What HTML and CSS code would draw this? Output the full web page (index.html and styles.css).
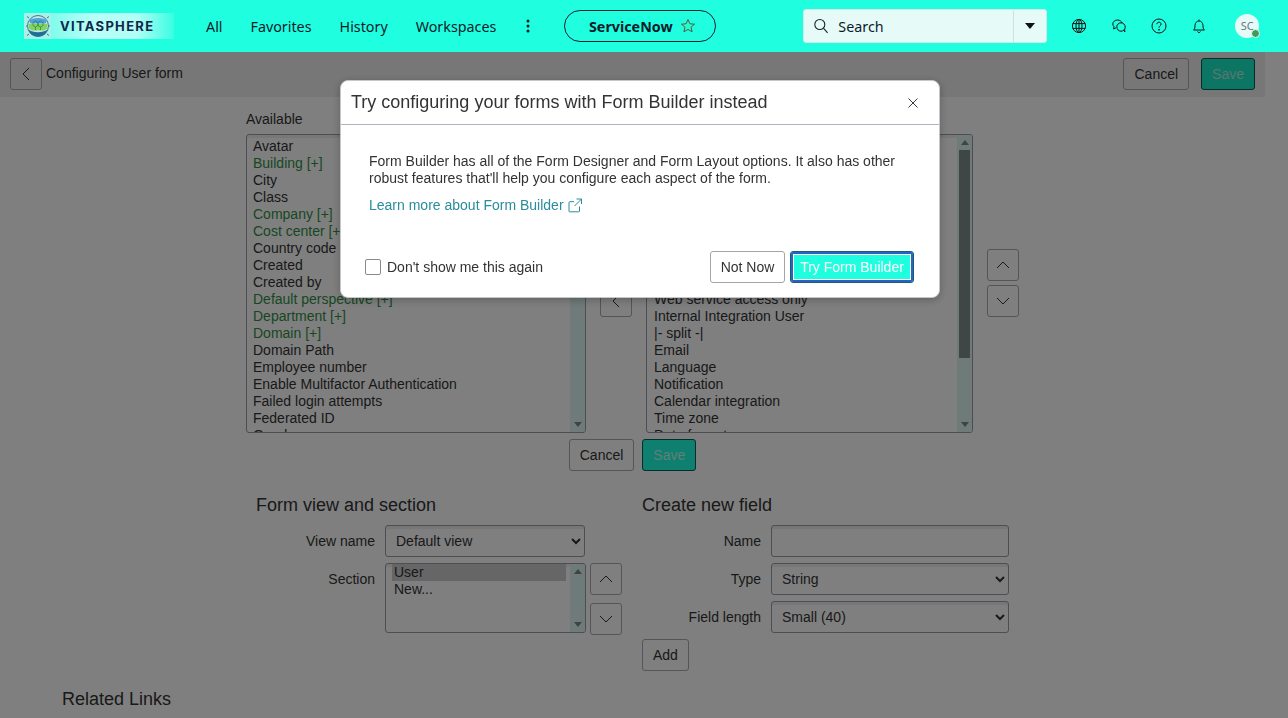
FILE: index.html
```html
<!DOCTYPE html>
<html lang="en">
<head>
  <meta charset="UTF-8" />
  <title>Configuring User form</title>
  <link rel="stylesheet" href="styles.css">
</head>
<body>
  <header class="topbar">
    <a class="logo">
      <span class="logo-mark">
        <svg width="24" height="24" viewBox="0 0 24 24">
          <circle cx="12" cy="12" r="10.500" fill="#bfe8ee" stroke="#33566e" stroke-width=".8"/>
          <path d="M3 6.500c3-3.500 15-3.500 18 0l-1.500 3h-15z" fill="#4aa6d8"/>
          <path d="M2.500 10h19l-.5 4.500-3 2h-12l-3-2z" fill="#7fd65a"/>
          <path d="M2.500 15.500c4 3.500 15 3.500 19 0-1.500 5-5 7-9.500 7s-8-2-9.500-7z" fill="#1f6fa5"/>
          <path d="M7 8.500l2.500-1.500L12 8.500v3L9.500 13 7 11.500zM12 8.500l2.500-1.500L17 8.500v3L14.500 13 12 11.500zM9.500 13v3M14.500 13v3M5 19c4 2 10 2 14-1" fill="none" stroke="#2b6a4a" stroke-width=".6"/>
          <path d="M1 12H0M24 12h-1M3 4L1 2.500M21 4l2-1.500M3 20l-2 1.500M21 20l2 1.500" stroke="#33566e" stroke-width=".8"/>
        </svg>
      </span>
      <span class="logo-name">VITASPHERE</span>
    </a>
    <nav class="nav">
      <a>All</a>
      <a>Favorites</a>
      <a>History</a>
      <a>Workspaces</a>
    </nav>
    <svg class="nav-more" width="4" height="14" viewBox="0 0 4 14"><circle cx="2" cy="2" r="1.500"/><circle cx="2" cy="7" r="1.500"/><circle cx="2" cy="12" r="1.500"/></svg>
    <div class="pill">
      <span>ServiceNow</span>
      <svg width="16" height="16" viewBox="0 0 16 16"><path d="M8 1.500l1.900 4.300 4.600.4-3.500 3 1.100 4.600L8 11.400l-4.100 2.400L5 9.200l-3.500-3 4.600-.4z" fill="none" stroke="#5d5a2a" stroke-width="1"/></svg>
    </div>
    <div class="search">
      <svg width="16" height="16" viewBox="0 0 16 16"><circle cx="6.800" cy="6.500" r="5" fill="none" stroke="#1a2230" stroke-width="1.100"/><path d="M10.400 10.200l4.200 4.600" stroke="#1a2230" stroke-width="1.100"/></svg>
      <span class="search-text">Search</span>
      <span class="search-caret"><i></i></span>
    </div>
    <div class="tools">
      <svg width="16" height="16" viewBox="0 0 16 16" fill="none" stroke="#111" stroke-width="1"><circle cx="8" cy="8" r="6.600"/><ellipse cx="8" cy="8" rx="3" ry="6.600"/><path d="M1.800 5.600h12.400M1.800 10.400h12.400M8 1.400v13.200"/></svg>
      <svg width="16" height="16" viewBox="0 0 16 16" fill="none" stroke="#111" stroke-width="1"><path d="M6.500 2C3.900 2 1.800 3.800 1.800 6c0 1 .4 1.900 1.200 2.600L2.600 11l2.300-1.200"/><path d="M6.500 2c2.300 0 4.200 1.300 4.600 3.100"/><circle cx="10" cy="9" r="4.200"/><path d="M12.500 12.400l1.400 1.500-.2-2.600"/></svg>
      <svg width="16" height="16" viewBox="0 0 16 16" fill="none" stroke="#111" stroke-width="1"><circle cx="8" cy="8" r="7"/><path d="M5.900 6.200C5.900 5 6.900 4.200 8 4.200s2.100.8 2.100 1.900c0 1.600-2.100 1.700-2.100 3.500"/><circle cx="8" cy="11.700" r=".5" fill="#111"/></svg>
      <svg width="16" height="16" viewBox="0 0 16 16" fill="none" stroke="#111" stroke-width="1"><path d="M2.500 12c1.300-1 1.500-2.200 1.500-4.500C4 5 5.700 3 8 3s4 2 4 4.500c0 2.300.2 3.500 1.500 4.500z"/><path d="M8 1.500V3M6.500 13.500c.3.800.8 1 1.500 1s1.200-.2 1.500-1"/></svg>
    </div>
    <div class="avatar">SC<span class="avatar-dot"></span></div>
  </header>

  <main class="page">
    <div class="form-head">
      <button class="btn btn-icon"><svg width="10" height="14" viewBox="0 0 10 14"><path d="M8 1L2 7l6 6" fill="none" stroke="#333" stroke-width="1"/></svg></button>
      <span class="form-title">Configuring User form</span>
      <span class="spacer"></span>
      <button class="btn">Cancel</button>
      <button class="btn btn-save btn-save-head">Save</button>
    </div>

    <section class="slush">
      <div class="slush-col">
        <label class="slush-label">Available</label>
        <div class="list list-avail">
          <div class="list-items">
            <div>Avatar</div>
            <div class="ref">Building [+]</div>
            <div>City</div>
            <div>Class</div>
            <div class="ref">Company [+]</div>
            <div class="ref">Cost center [+]</div>
            <div>Country code</div>
            <div>Created</div>
            <div>Created by</div>
            <div class="ref">Default perspective [+]</div>
            <div class="ref">Department [+]</div>
            <div class="ref">Domain [+]</div>
            <div>Domain Path</div>
            <div>Employee number</div>
            <div>Enable Multifactor Authentication</div>
            <div>Failed login attempts</div>
            <div>Federated ID</div>
            <div>Gender</div>
            <div>Home phone</div>
          </div>
          <div class="scrollbar">
            <span class="sb-arrow sb-up"></span>
            <div class="sb-track"><div class="sb-thumb sb-thumb-avail"></div></div>
            <span class="sb-arrow sb-down"></span>
          </div>
        </div>
      </div>
      <div class="move-col">
        <button class="btn btn-icon"><svg width="10" height="14" viewBox="0 0 10 14"><path d="M2 1l6 6-6 6" fill="none" stroke="#333" stroke-width="1"/></svg></button>
        <button class="btn btn-icon"><svg width="10" height="14" viewBox="0 0 10 14"><path d="M8 1L2 7l6 6" fill="none" stroke="#333" stroke-width="1"/></svg></button>
      </div>
      <div class="slush-col">
        <label class="slush-label">Selected</label>
        <div class="list list-sel">
          <div class="list-items">
            <div>User ID</div>
            <div>First name</div>
            <div>Last name</div>
            <div>Title</div>
            <div>Department</div>
            <div>Password</div>
            <div>Password needs reset</div>
            <div>Locked out</div>
            <div>Active</div>
            <div>Web service access only</div>
            <div>Internal Integration User</div>
            <div>|- split -|</div>
            <div>Email</div>
            <div>Language</div>
            <div>Notification</div>
            <div>Calendar integration</div>
            <div>Time zone</div>
            <div>Date format</div>
            <div>Time format</div>
          </div>
          <div class="scrollbar">
            <span class="sb-arrow sb-up"></span>
            <div class="sb-track"><div class="sb-thumb sb-thumb-sel"></div></div>
            <span class="sb-arrow sb-down"></span>
          </div>
        </div>
      </div>
      <div class="move-col">
        <button class="btn btn-icon"><svg width="14" height="10" viewBox="0 0 14 10"><path d="M1 8l6-6 6 6" fill="none" stroke="#333" stroke-width="1"/></svg></button>
        <button class="btn btn-icon"><svg width="14" height="10" viewBox="0 0 14 10"><path d="M1 2l6 6 6-6" fill="none" stroke="#333" stroke-width="1"/></svg></button>
      </div>
    </section>

    <div class="slush-actions">
      <button class="btn">Cancel</button>
      <button class="btn btn-save">Save</button>
    </div>

    <section class="config">
      <div class="config-view">
        <h3 class="config-title config-title-view">Form view and section</h3>
        <div class="field field-view">
          <label>View name</label>
          <select class="input"><option>Default view</option></select>
        </div>
        <div class="field field-view">
          <label>Section</label>
          <div class="section-pick">
            <div class="list list-section">
              <div class="list-items">
                <div class="picked">User</div>
                <div>New...</div>
              </div>
              <div class="scrollbar">
                <span class="sb-arrow sb-up"></span>
                <div class="sb-track"></div>
                <span class="sb-arrow sb-down"></span>
              </div>
            </div>
            <div class="section-move">
              <button class="btn btn-icon"><svg width="14" height="10" viewBox="0 0 14 10"><path d="M1 8l6-6 6 6" fill="none" stroke="#333" stroke-width="1"/></svg></button>
              <button class="btn btn-icon"><svg width="14" height="10" viewBox="0 0 14 10"><path d="M1 2l6 6 6-6" fill="none" stroke="#333" stroke-width="1"/></svg></button>
            </div>
          </div>
        </div>
      </div>
      <div class="config-new">
        <h3 class="config-title">Create new field</h3>
        <div class="field field-new">
          <label>Name</label>
          <input class="input" type="text">
        </div>
        <div class="field field-new">
          <label>Type</label>
          <select class="input"><option>String</option></select>
        </div>
        <div class="field field-new">
          <label>Field length</label>
          <select class="input"><option>Small (40)</option></select>
        </div>
        <button class="btn btn-add">Add</button>
      </div>
    </section>

    <h3 class="related">Related Links</h3>
  </main>

  <div class="backdrop"></div>
  <div class="modal">
    <div class="modal-head">
      <h2>Try configuring your forms with Form Builder instead</h2>
      <svg width="12" height="12" viewBox="0 0 12 12"><path d="M1.500 1.500l9 9M10.500 1.500l-9 9" stroke="#222" stroke-width=".9"/></svg>
    </div>
    <div class="modal-body">
      <p>Form Builder has all of the Form Designer and Form Layout options. It also has other robust features that'll help you configure each aspect of the form.</p>
      <a class="modal-link">Learn more about Form Builder
        <svg width="15" height="15" viewBox="0 0 15 15" fill="none" stroke="#2a8c9c" stroke-width="1"><path d="M11.500 8.500v4.500a.8.8 0 0 1-.8.8H1.800a.8.8 0 0 1-.8-.8V4.500a.8.8 0 0 1 .8-.8H6"/><path d="M8.500 1h5v5M13.500 1L6.500 8"/></svg>
      </a>
    </div>
    <div class="modal-foot">
      <label class="check"><input type="checkbox"><span>Don't show me this again</span></label>
      <span class="spacer"></span>
      <button class="btn btn-light">Not Now</button>
      <button class="btn btn-primary">Try Form Builder</button>
    </div>
  </div>
</body>
</html>
```
FILE: styles.css
```css
* {
  box-sizing: border-box;
}
html, body {
  height: 100%;
}
body {
  margin: 0;
  overflow: hidden;
  background-color: #fff;
  color: #333;
  font-family: "Liberation Sans", Arial, sans-serif;
  font-size: 14px;
}
h2, h3, p {
  margin: 0;
  font-weight: normal;
}
.spacer {
  flex: 1;
}

/* top bar */
.topbar {
  display: flex;
  align-items: center;
  height: 52px;
  padding-left: 24px;
  background-color: #1fffdf;
  color: #0c1a2b;
  font-family: "Noto Sans", sans-serif;
  font-size: 14.3px;
}
.logo {
  display: flex;
  width: 150px;
  height: 26px;
}
.logo-mark {
  display: flex;
  align-items: center;
  justify-content: center;
  flex: none;
  width: 27px;
  background-color: #a8f0e8;
}
.logo-name {
  flex: 1;
  padding-left: 9px;
  background: linear-gradient(90deg, #7ffcec 0%, #b8fff8 35%, #b0fff5 70%, #3afde3 100%);
  color: #12254a;
  font-family: Inter, sans-serif;
  font-size: 13px;
  font-weight: 700;
  letter-spacing: 1.3px;
  line-height: 26px;
}
.nav {
  display: flex;
  gap: 28px;
  margin-left: 32px;
}
.nav-more {
  margin-left: 30px;
  fill: #0c1a2b;
}
.pill {
  display: flex;
  align-items: center;
  justify-content: center;
  gap: 7px;
  width: 152px;
  height: 32px;
  margin-left: 34px;
  padding-left: 4px;
  border: 1px solid #123;
  border-radius: 16px;
  font-weight: 700;
}
.search {
  display: flex;
  align-items: center;
  width: 244px;
  height: 34px;
  margin-left: 87px;
  padding-left: 9px;
  border: 1px solid #cfe9e6;
  border-radius: 3px;
  background-color: #e6faf7;
}
.search-text {
  flex: 1;
  margin-left: 9px;
}
.search-caret {
  display: flex;
  align-items: center;
  justify-content: center;
  width: 33px;
  height: 100%;
  border-left: 1px solid #cfe0de;
}
.search-caret i {
  border: 5px solid transparent;
  border-top: 6px solid #111;
  border-bottom: 0;
}
.tools {
  display: flex;
  gap: 24px;
  margin-left: 24px;
}
.avatar {
  position: relative;
  width: 24px;
  height: 24px;
  margin-left: 28px;
  border-radius: 50%;
  background-color: #e6faf7;
  color: #6b7480;
  font-size: 11px;
  line-height: 24px;
  text-align: center;
}
.avatar-dot {
  position: absolute;
  right: -1px;
  bottom: 0;
  width: 9px;
  height: 9px;
  border: 1.5px solid #e6faf7;
  border-radius: 50%;
  background-color: #3f9b5a;
}

/* page under the dialog */
.page {
  width: 1265px;
}
.form-head {
  display: flex;
  height: 45px;
  padding: 6px 10px;
  gap: 12px;
  background-color: #eee;
}
.form-title {
  margin: 7px 0 0 -8px;
}
.btn {
  height: 32px;
  padding: 0 10px;
  border: 1px solid #aaa;
  border-radius: 3px;
  background: transparent;
  color: #333;
  font-family: inherit;
  font-size: 14px;
}
.btn-icon {
  display: flex;
  align-items: center;
  justify-content: center;
  width: 32px;
  padding: 0;
}
.btn-save {
  border-color: #0c5a50;
  background-color: #1fffdf;
  color: #c0fff0;
}
.btn-save-head {
  background-color: #1aeac8;
  color: #b0f0e0;
}

.slush {
  display: flex;
  gap: 14px;
  padding: 13px 0 0 246px;
}
.slush-label {
  display: block;
  height: 24px;
  line-height: 19px;
}
.list {
  display: flex;
  height: 299px;
  overflow: hidden;
  border: 1px solid #9b9ba6;
  border-radius: 3px;
  background-color: #fff;
  box-shadow: inset 0 3px 0 #eee;
}
.list-items {
  flex: 1;
  overflow: hidden;
  padding: 3px 0 0 4px;
  line-height: 17px;
  white-space: nowrap;
}
.list-items div {
  height: 17px;
  padding: 0 2px;
}
.list-items .ref {
  color: #2f8f45;
}
.list-items .picked {
  background-color: #ccc;
}
.list-avail {
  width: 340px;
}
.list-sel {
  width: 327px;
}
.list-sel .list-items {
  padding-left: 5px;
}
.scrollbar {
  display: flex;
  flex-direction: column;
  flex: none;
  width: 15px;
  background-color: #dff6f2;
}
.sb-arrow {
  display: flex;
  align-items: center;
  justify-content: center;
  flex: none;
  height: 15px;
}
.sb-arrow::before {
  content: "";
  border-right: 4px solid transparent;
  border-left: 4px solid transparent;
}
.sb-up::before {
  border-bottom: 5px solid #788888;
}
.sb-down::before {
  border-top: 5px solid #788888;
}
.sb-track {
  flex: 1;
}
.sb-thumb {
  margin: 0 2px;
  background-color: #7f8c8c;
}
.sb-thumb-avail {
  height: 140px;
}
.sb-thumb-sel {
  height: 208px;
}
.move-col {
  display: flex;
  flex-direction: column;
  gap: 4px;
  padding-top: 139px;
}

.slush-actions {
  display: flex;
  justify-content: center;
  gap: 8px;
  margin-top: 6px;
}

.config {
  display: flex;
  padding: 23px 0 0 246px;
}
.config-view {
  width: 396px;
}
.config-title {
  height: 22px;
  margin-bottom: 9px;
  font-size: 18px;
  line-height: 22px;
}
.config-title-view {
  padding-left: 10px;
}
.field {
  display: grid;
  column-gap: 10px;
  margin-bottom: 6px;
  line-height: 32px;
}
.field label {
  text-align: right;
}
.field-view {
  grid-template-columns: 129px auto;
}
.field-new {
  grid-template-columns: 119px 238px;
}
.input {
  height: 32px;
  padding: 0 6px;
  border: 1px solid #9b9ba6;
  border-radius: 3px;
  background-color: #fff;
  box-shadow: inset 0 3px 0 #eee;
  color: #333;
  font-family: inherit;
  font-size: 14px;
}
.field-view .input {
  width: 200px;
}
.section-pick {
  display: flex;
  gap: 4px;
}
.list-section {
  width: 201px;
  height: 70px;
}
.list-section .list-items {
  padding: 0 4px 0 6px;
}
.section-move {
  display: flex;
  flex-direction: column;
  gap: 8px;
}
.btn-add {
  display: block;
}
.related {
  margin: 18px 0 0 62px;
  font-size: 18px;
}

/* dialog */
.backdrop {
  position: fixed;
  top: 52px;
  right: 0;
  bottom: 0;
  left: 0;
  background-color: rgba(0, 0, 0, 0.5);
}
.modal {
  position: fixed;
  top: 80px;
  left: 340px;
  width: 600px;
  height: 218px;
  border: 1px solid #c4c7cc;
  border-radius: 8px;
  background-color: #fff;
  box-shadow: 0 2px 8px rgba(0, 0, 0, 0.25);
}
.modal-head {
  display: flex;
  align-items: center;
  justify-content: space-between;
  height: 44px;
  padding: 0 20px 0 10px;
  border-bottom: 1px solid #b0b4bc;
}
.modal-head h2 {
  margin-top: -2px;
  font-size: 18px;
  line-height: 22px;
}
.modal-body {
  height: 126px;
  padding: 28px 28px 0;
  line-height: 17px;
}
.modal-link {
  display: flex;
  align-items: center;
  gap: 4px;
  margin-top: 10px;
  color: #2a8c9c;
}
.modal-foot {
  display: flex;
  align-items: flex-start;
  gap: 5px;
  padding: 0 25px 0 24px;
}
.check {
  display: flex;
  align-items: center;
  gap: 6px;
  height: 32px;
}
.check input {
  width: 16px;
  height: 16px;
  margin: 0;
  appearance: none;
  border: 1px solid #8a8a8a;
  border-radius: 2px;
  background-color: #fff;
}
.btn-light {
  width: 75px;
  padding: 0;
  border-color: #a5a5a5;
  background-color: #fff;
}
.btn-primary {
  width: 124px;
  padding: 0;
  border: 1px solid #17606e;
  background-color: #1fffdf;
  box-shadow: inset 0 0 0 2px #2d5fc4, inset 0 0 0 3px #fff;
  color: #fff;
  outline: none;
}
```
